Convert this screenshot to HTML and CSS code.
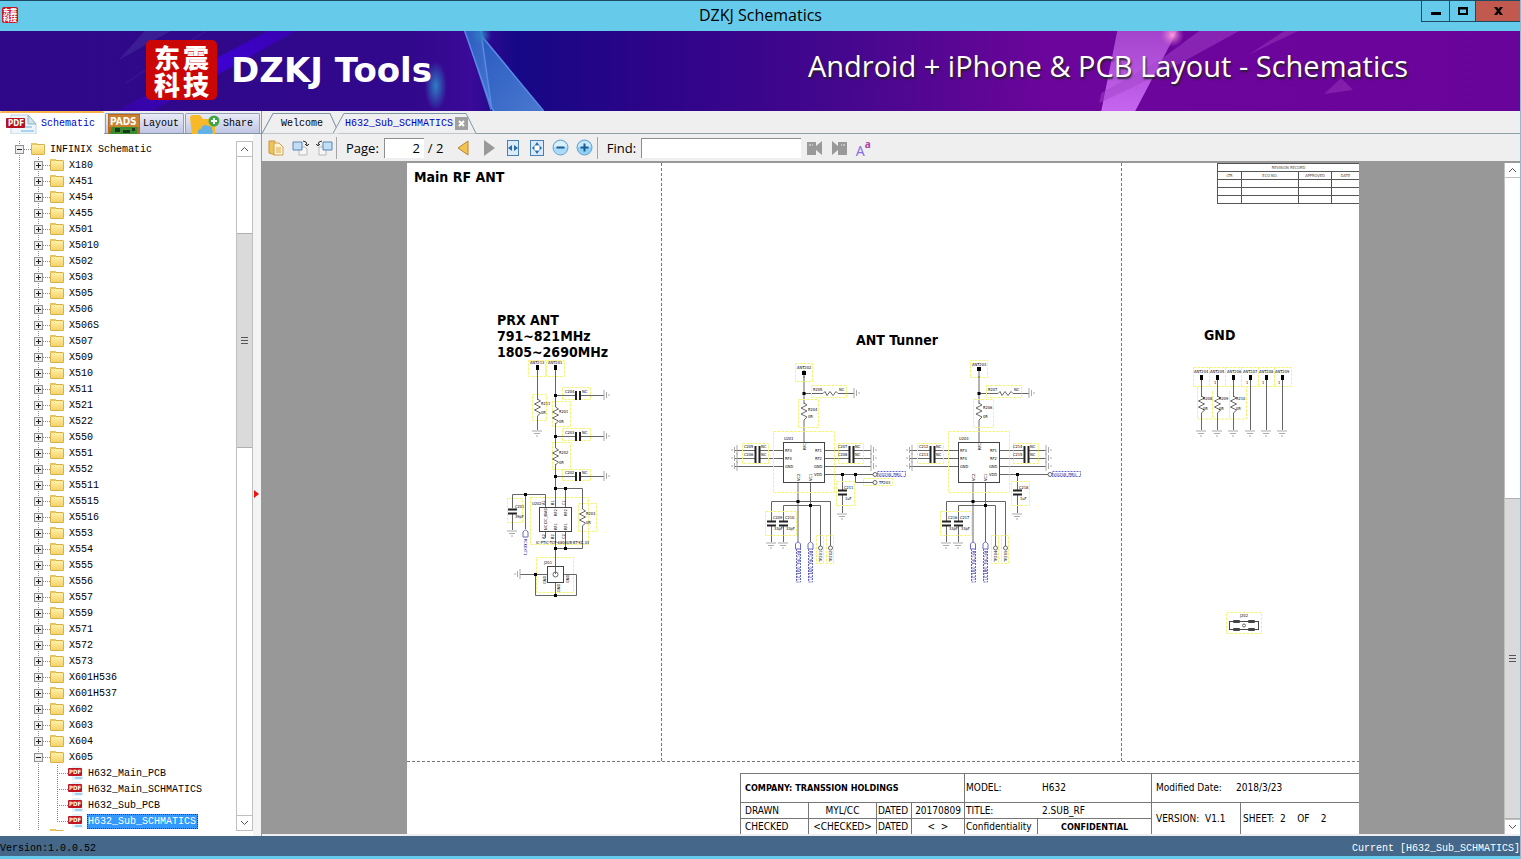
FILE: index.html
```html
<!DOCTYPE html>
<html lang="en">
<head>
  <meta charset="UTF-8">
  <title>DZKJ Schematics</title>
  <link rel="stylesheet" href="styles.css">
</head>
<body>
<div class="window">

  <!-- Title bar -->
  <header class="titlebar">
    <span class="app-icon" aria-hidden="true"><b>东</b><b>震</b><b>科</b><b>技</b></span>
    <h1>DZKJ Schematics</h1>
    <div class="window-buttons">
      <button class="min" aria-label="Minimize"><svg width="10" height="10"><rect y="6" width="10" height="3"/></svg></button>
      <button class="max" aria-label="Maximize"><svg width="10" height="8"><path d="M0 0h10v8H0zM2 2.500v3.500h6V2.500z" fill-rule="evenodd"/></svg></button>
      <button class="close" aria-label="Close"><svg width="9" height="8"><path d="M0 0h3l1.500 2L6 0h3L6 4l3 4H6L4.500 6 3 8H0l3-4z"/></svg></button>
    </div>
  </header>

  <!-- Banner -->
  <div class="banner">
    <svg class="banner-art" viewBox="0 0 1521 80" preserveAspectRatio="none" aria-hidden="true">
      <defs>
        <linearGradient id="ray" x1="0" y1="0" x2="1" y2="1"><stop offset="0" stop-color="#2a5cc0"/><stop offset="1" stop-color="#4a78d0"/></linearGradient>
        <linearGradient id="pink" x1="0" y1="0" x2="0" y2="1"><stop offset="0" stop-color="#a443cb"/><stop offset="1" stop-color="#c565f0"/></linearGradient>
        <linearGradient id="blue" x1="1" y1="0" x2="0" y2="1"><stop offset="0" stop-color="#3a00b8"/><stop offset=".4" stop-color="#4100e0"/><stop offset="1" stop-color="#3703a8"/></linearGradient>
        <radialGradient id="glow"><stop offset="0" stop-color="#2d7fc4"/><stop offset="1" stop-color="#2d7fc4" stop-opacity="0"/></radialGradient>
        <radialGradient id="spark"><stop offset="0" stop-color="#ff9de0"/><stop offset="1" stop-color="#d060d0" stop-opacity="0"/></radialGradient>
      </defs>
      <path d="M268 0h28L152 80h-35z" fill="url(#blue)" opacity=".8"/>
      <path d="M145 0h25l-50 28zM206 0l-80 52" fill="#4530a0" stroke="#4b2a9e" opacity=".5"/>
      <ellipse cx="436" cy="55" rx="11" ry="25" fill="url(#glow)"/>
      <path d="M465 0h18l9 78-1 2z" fill="url(#ray)"/>
      <path d="M482 5l62 75h-51l-1-4z" fill="url(#ray)"/>
      <path d="M465 0l27 77 2 3M481 0l11 77M482 5l62 75" fill="none" stroke="#5b8ae6" stroke-width="1.500"/>
      <circle cx="482" cy="4" r="10" fill="url(#glow)"/>
      <path d="M1118 0h60l-42 80h-34z" fill="url(#pink)"/>
      <path d="M1200 0h40l-62 34-40 20-38 18 2-10 60-34z" fill="#a443cb" opacity=".5"/>
      <path d="M1285 0h14l-50 24zM1342 47l12 12-29 4z" fill="#8b2ab4" opacity=".7"/>
      <circle cx="1173" cy="4" r="12" fill="url(#spark)"/>
    </svg>
    <div class="logo"><b>东</b><b>震</b><b>科</b><b>技</b></div>
    <strong class="brand">DZKJ Tools</strong>
    <span class="slogan">Android + iPhone &amp; PCB Layout - Schematics</span>
  </div>

  <div class="main">
    <!-- Left panel -->
    <aside class="sidebar">
      <nav class="side-tabs">
        <button class="side-tab active">
          <svg width="32" height="20" viewBox="0 0 32 20"><path d="M5 1h17l8 9v10H5z" fill="#eef6fb" stroke="#bcd3df"/><path d="M22 1l8 9h-8z" fill="#cfe2ee" stroke="#8fb3c9"/><path d="M15 13h11M15 17h13" stroke="#a9d4ee" stroke-width="2"/><rect y="4" width="19" height="10" rx="1" fill="#b51220"/><text x="2" y="12" class="pdf-text">PDF</text></svg>
          Schematic</button>
        <button class="side-tab layout">
          <svg width="32" height="20" viewBox="0 0 32 20"><rect width="32" height="20" fill="#bb691d"/><rect x="1" y="1" width="30" height="12" fill="#c9822d"/><text x="2" y="11" class="pads-text">PADS</text><path d="M4 13h25v7H2z" fill="#3d8b31"/><path d="M7 14h5v4H7zM15 16h7v3h-7zM24 14h3v3h-3z" fill="#153b1c"/></svg>
          Layout</button>
        <button class="side-tab share">
          <svg width="32" height="20" viewBox="0 0 32 20"><path d="M2 4q0-3 3-3h7l3 4h10q2 0 2 3v12H4z" fill="#f8b928"/><path d="M10 20q-1-5 3-5 2-6 7-3 5 0 4 4 2 1 0 4z" fill="#62b2e8"/><circle cx="26" cy="7" r="5.500" fill="#3fa648"/><path d="M26 4v6M23 7h6" stroke="#fff" stroke-width="2"/></svg>
          Share</button>
      </nav>
      <div class="side-body">
        <ul class="tree">
          <li><div class="row"><button class="toggle open" aria-label="Collapse"></button><i class="folder"></i>INFINIX Schematic</div>
            <ul>
              <li><div class="row"><button class="toggle" aria-label="Expand"></button><i class="folder"></i>X180</div></li>
              <li><div class="row"><button class="toggle" aria-label="Expand"></button><i class="folder"></i>X451</div></li>
              <li><div class="row"><button class="toggle" aria-label="Expand"></button><i class="folder"></i>X454</div></li>
              <li><div class="row"><button class="toggle" aria-label="Expand"></button><i class="folder"></i>X455</div></li>
              <li><div class="row"><button class="toggle" aria-label="Expand"></button><i class="folder"></i>X501</div></li>
              <li><div class="row"><button class="toggle" aria-label="Expand"></button><i class="folder"></i>X5010</div></li>
              <li><div class="row"><button class="toggle" aria-label="Expand"></button><i class="folder"></i>X502</div></li>
              <li><div class="row"><button class="toggle" aria-label="Expand"></button><i class="folder"></i>X503</div></li>
              <li><div class="row"><button class="toggle" aria-label="Expand"></button><i class="folder"></i>X505</div></li>
              <li><div class="row"><button class="toggle" aria-label="Expand"></button><i class="folder"></i>X506</div></li>
              <li><div class="row"><button class="toggle" aria-label="Expand"></button><i class="folder"></i>X506S</div></li>
              <li><div class="row"><button class="toggle" aria-label="Expand"></button><i class="folder"></i>X507</div></li>
              <li><div class="row"><button class="toggle" aria-label="Expand"></button><i class="folder"></i>X509</div></li>
              <li><div class="row"><button class="toggle" aria-label="Expand"></button><i class="folder"></i>X510</div></li>
              <li><div class="row"><button class="toggle" aria-label="Expand"></button><i class="folder"></i>X511</div></li>
              <li><div class="row"><button class="toggle" aria-label="Expand"></button><i class="folder"></i>X521</div></li>
              <li><div class="row"><button class="toggle" aria-label="Expand"></button><i class="folder"></i>X522</div></li>
              <li><div class="row"><button class="toggle" aria-label="Expand"></button><i class="folder"></i>X550</div></li>
              <li><div class="row"><button class="toggle" aria-label="Expand"></button><i class="folder"></i>X551</div></li>
              <li><div class="row"><button class="toggle" aria-label="Expand"></button><i class="folder"></i>X552</div></li>
              <li><div class="row"><button class="toggle" aria-label="Expand"></button><i class="folder"></i>X5511</div></li>
              <li><div class="row"><button class="toggle" aria-label="Expand"></button><i class="folder"></i>X5515</div></li>
              <li><div class="row"><button class="toggle" aria-label="Expand"></button><i class="folder"></i>X5516</div></li>
              <li><div class="row"><button class="toggle" aria-label="Expand"></button><i class="folder"></i>X553</div></li>
              <li><div class="row"><button class="toggle" aria-label="Expand"></button><i class="folder"></i>X554</div></li>
              <li><div class="row"><button class="toggle" aria-label="Expand"></button><i class="folder"></i>X555</div></li>
              <li><div class="row"><button class="toggle" aria-label="Expand"></button><i class="folder"></i>X556</div></li>
              <li><div class="row"><button class="toggle" aria-label="Expand"></button><i class="folder"></i>X557</div></li>
              <li><div class="row"><button class="toggle" aria-label="Expand"></button><i class="folder"></i>X559</div></li>
              <li><div class="row"><button class="toggle" aria-label="Expand"></button><i class="folder"></i>X571</div></li>
              <li><div class="row"><button class="toggle" aria-label="Expand"></button><i class="folder"></i>X572</div></li>
              <li><div class="row"><button class="toggle" aria-label="Expand"></button><i class="folder"></i>X573</div></li>
              <li><div class="row"><button class="toggle" aria-label="Expand"></button><i class="folder"></i>X601H536</div></li>
              <li><div class="row"><button class="toggle" aria-label="Expand"></button><i class="folder"></i>X601H537</div></li>
              <li><div class="row"><button class="toggle" aria-label="Expand"></button><i class="folder"></i>X602</div></li>
              <li><div class="row"><button class="toggle" aria-label="Expand"></button><i class="folder"></i>X603</div></li>
              <li><div class="row"><button class="toggle" aria-label="Expand"></button><i class="folder"></i>X604</div></li>
              <li><div class="row"><button class="toggle open" aria-label="Collapse"></button><i class="folder"></i>X605</div>
                <ul class="files">
                  <li class="row"><svg class="pdf" viewBox="0 0 15 14"><use href="#pdf"/></svg><a href="#">H632_Main_PCB</a></li>
                  <li class="row"><svg class="pdf" viewBox="0 0 15 14"><use href="#pdf"/></svg><a href="#">H632_Main_SCHMATICS</a></li>
                  <li class="row"><svg class="pdf" viewBox="0 0 15 14"><use href="#pdf"/></svg><a href="#">H632_Sub_PCB</a></li>
                  <li class="row"><svg class="pdf" viewBox="0 0 15 14"><use href="#pdf"/></svg><a href="#" class="selected">H632_Sub_SCHMATICS</a></li>
                </ul>
              </li>
              <li><div class="row"><i class="folder last"></i></div></li>
            </ul>
          </li>
        </ul>
        <div class="scrollbar">
          <button aria-label="Scroll up"><svg width="9" height="6"><path d="M1 5l3.500-3.500L8 5"/></svg></button>
          <span class="track tree-before"></span>
          <span class="thumb tree-thumb"></span>
          <span class="track tree-after"></span>
          <button aria-label="Scroll down"><svg width="9" height="6"><path d="M1 1l3.500 3.500L8 1"/></svg></button>
        </div>
        <div class="splitter"><svg width="5" height="8"><path d="M0 0l5 4-5 4z" fill="#e11"/></svg></div>
      </div>
    </aside>

    <!-- Document area -->
    <section class="workspace">
      <nav class="doc-tabs">
        <button class="doc-tab welcome">
          <svg class="tab-shape" viewBox="0 0 78 21" preserveAspectRatio="none"><path d="M0 20.500L11 .5h57l9 20"/></svg>
          <span>Welcome</span></button>
        <div class="doc-tab current">
          <svg class="tab-shape" viewBox="0 0 146 21" preserveAspectRatio="none"><path d="M0 20.500L11 .5h124l10 20"/></svg>
          <a href="#">H632_Sub_SCHMATICS</a>
          <button class="tab-close" aria-label="Close tab"><svg width="7" height="7"><path d="M1 1l5 5M6 1L1 6" stroke="#fff" stroke-width="2"/></svg></button>
        </div>
      </nav>

      <div class="toolbar">
        <button aria-label="Open"><svg width="16" height="16" viewBox="0 0 16 16"><path d="M1 1h6v14l-6-2z" fill="#efc25c" stroke="#c9963c"/><path d="M6 3h5l4 4v8H6z" fill="#fff3d0" stroke="#d0a050"/><path d="M8 8h5M8 10h5M8 12h5" stroke="#d9a957"/></svg></button>
        <button aria-label="Rotate clockwise"><svg width="17" height="16" viewBox="0 0 17 16"><path d="M7 7h6l2 2v6H7z" fill="#f6f6f6" stroke="#b9b9b9"/><path d="M1 2h9v8H1z" fill="#c2def5" stroke="#5b83b3"/><path d="M11 1q4 0 4 4M13 4l2 2 2-2" fill="none" stroke="#333"/></svg></button>
        <button aria-label="Rotate counterclockwise"><svg width="17" height="16" viewBox="0 0 17 16"><path d="M3 7h7v8H3z" fill="#f6f6f6" stroke="#b9b9b9"/><path d="M7 2h9v8H7z" fill="#c2def5" stroke="#5b83b3"/><path d="M6 1Q2 1 2 5M0 4l2 2 2-2" fill="none" stroke="#333"/></svg></button>
        <span class="sep"></span>
        <label for="page">Page:</label>
        <input id="page" class="page-input" type="text" value="2">
        <span class="page-total">/ 2</span>
        <button class="prev" aria-label="Previous page"><svg width="12" height="16" viewBox="0 0 12 16"><path d="M11 1v14L1 8z" fill="#f3c351" stroke="#b58730"/></svg></button>
        <button class="next" aria-label="Next page"><svg width="12" height="16" viewBox="0 0 12 16"><path d="M1 0v16L12 8z" fill="#999"/></svg></button>
        <button aria-label="Fit width"><svg width="16" height="16" viewBox="0 0 16 16"><rect x="2.500" y=".5" width="11" height="15" fill="#d7ebfa" stroke="#4d7eb0"/><path d="M3 8l4-3v6zM13 8L9 5v6z" fill="#2d67a5"/></svg></button>
        <button aria-label="Fit page"><svg width="16" height="16" viewBox="0 0 16 16"><rect x="1.500" y=".5" width="13" height="15" fill="#d7ebfa" stroke="#4d7eb0"/><path d="M8 2l2 3H6zM8 14l2-3H6zM3 8l2-2v4zM13 8l-2-2v4z" fill="#2d67a5"/><rect x="5.500" y="5.500" width="5" height="5" fill="#fff" stroke="#9bbfdd"/></svg></button>
        <button aria-label="Zoom out"><svg width="17" height="17" viewBox="0 0 17 17"><circle cx="8.500" cy="8.500" r="7.500" fill="#a8dcf8" stroke="#6d9fc4"/><path d="M2 8a6.500 6 0 0 1 13 0z" fill="#d9f1fd"/><path d="M4.500 8.500h8" stroke="#1d5b94" stroke-width="2"/></svg></button>
        <button aria-label="Zoom in"><svg width="17" height="17" viewBox="0 0 17 17"><circle cx="8.500" cy="8.500" r="7.500" fill="#8fd0f6" stroke="#6d9fc4"/><path d="M2 8a6.500 6 0 0 1 13 0z" fill="#c9eafc"/><path d="M4.500 8.500h8M8.500 4.500v8" stroke="#1d5b94" stroke-width="2"/></svg></button>
        <span class="sep"></span>
        <label for="find">Find:</label>
        <input id="find" class="find-input" type="text">
        <button class="find-prev" aria-label="Find previous"><svg width="16" height="16" viewBox="0 0 16 16"><path d="M0 2h9v4l6-5v14l-6-5v5H0z" fill="#999"/><path d="M2 5h2M5 5h1" stroke="#eee"/></svg></button>
        <button class="find-next" aria-label="Find next"><svg width="16" height="16" viewBox="0 0 16 16"><path d="M16 2H7v4L1 1v14l6-5v5h9z" fill="#999"/><path d="M14 5h-2M11 5h-1" stroke="#eee"/></svg></button>
        <button class="match-case" aria-label="Match case"><span>A</span><sup>a</sup></button>
      </div>

      <div class="viewer">
        <div class="canvas">
          <article class="page">
            <svg class="drawing" width="952" height="610" viewBox="407 163 952 610">
              <defs>
                <g id="pdf"><path d="M4 0h8l3 3v11H4z" fill="#e5f3fb"/><path d="M7 12h7" stroke="#9fd0ee" stroke-width="2"/><rect y="2" width="14" height="8" rx="1" fill="#c01622"/><text x="1" y="8" class="pdf-small">PDF</text></g>
                <path id="gnd" d="M-5 0H5M-3 2.500H3M-1 5H1" class="gnd"/>
                <path id="res" d="M0 -9L3 -7 -3 -4 3 -1 -3 2 3 5 0 8" class="wire"/>
                <path id="cap" d="M-2 -4V5M2 -4V5" class="plate"/>
                <g id="pill"><path d="M-2.500 7V2Q0 -2 2.500 2V7z" class="blue-line"/></g>
                <!-- Antenna tuner, shared by both channels -->
                <g id="tuner">
                  <path class="wire" d="M804 376V404M804 420V442M804 393.500H823l2-2 2 4 3-4 3 4 3-4 2 2H854M735 450.500H755M759 450.500H783M735 458.500H755M759 458.500H783M735 466.500H783M824 450.500H849M853 450.500H871M824 458.500H849M853 458.500H871M824 466.500H871M824 474.500H873M842.500 474V490M842.500 494V513M798 482V542M810.500 482V542M771.500 521V501.500H830.500V546M783.500 521V505.500H820.500V546M771.500 525V542M783.500 525V542"/>
                  <rect x="783.500" y="442.500" width="41" height="40" class="chip"/>
                  <use href="#res" x="804" y="412"/>
                  <use href="#gnd" transform="translate(854 393) rotate(-90)"/>
                  <use href="#gnd" transform="translate(871 450) rotate(-90)"/>
                  <use href="#gnd" transform="translate(871 458) rotate(-90)"/>
                  <use href="#gnd" transform="translate(871 466) rotate(-90)"/>
                  <use href="#gnd" transform="translate(737 450) rotate(90)"/>
                  <use href="#gnd" transform="translate(737 458) rotate(90)"/>
                  <use href="#gnd" transform="translate(737 466) rotate(90)"/>
                  <use href="#gnd" x="842" y="514"/>
                  <use href="#gnd" x="771" y="543"/>
                  <use href="#gnd" x="783" y="543"/>
                  <path class="plate" d="M755.500 446v17M759.500 446v17M849.500 446v17M853.500 446v17M838 490.500h9M838 494.500h9M767 521.500h9M767 525.500h9M779 521.500h9M779 525.500h9"/>
                  <circle cx="875" cy="474.500" r="2" class="ring"/>
                  <circle cx="820.500" cy="548" r="2" class="ring"/>
                  <circle cx="830.500" cy="548" r="2" class="ring"/>
                  <use href="#pill" x="798" y="542"/>
                  <use href="#pill" x="810.500" y="542"/>
                  <path class="dot" d="M802.500 392h3v3h-3zM796.500 500h3v3h-3zM809 504h3v3h-3zM841 473h3v3h-3z"/>
                  <path class="zone" d="M773.500 431.500h61v61h-61zM811.500 385.500h35v12h-35zM798.500 399.500h20v28h-20zM742.500 443.500h26v20h-26zM838.500 443.500h25v20h-25zM836.500 481.500h18v24h-18zM765.500 511.500h31v24h-31zM816.500 535.500h7v28h-7zM826.500 535.500h7v28h-7z"/>
                  <text x="839" y="391">NC</text>
                  <text x="761" y="448">NC</text><text x="761" y="456">NC</text>
                  <text x="855" y="448">NC</text><text x="855" y="456">NC</text>
                  <text x="785" y="452">RF3</text><text x="785" y="460">RF4</text><text x="785" y="468">GND</text>
                  <text x="815" y="452">RF1</text><text x="815" y="460">RF2</text><text x="814" y="468">GND</text><text x="814" y="476">VDD</text>
                  <text transform="translate(806 450) rotate(-90)">RFC</text>
                  <text transform="translate(800 481) rotate(-90)">VC2</text>
                  <text transform="translate(812 481) rotate(-90)">VC1</text>
                  <text x="845" y="500">1uF</text><text x="774" y="530">33pF</text><text x="786" y="530">33pF</text>
                  <rect x="877.500" y="471.500" width="28" height="5" class="blue-dash"/>
                  <path class="blue-dash" d="M796.500 549v33h4v-33M808.500 549v33h4v-33"/>
                </g>
              </defs>

              <path class="border" d="M661.500 163V761M1121.500 163V761M407 761.500H1359"/>

              <g class="heading">
                <text x="414" y="182">Main RF ANT</text>
                <text x="497" y="325">PRX ANT</text>
                <text x="497" y="341">791~821MHz</text>
                <text x="497" y="357">1805~2690MHz</text>
                <text x="856" y="345">ANT Tunner</text>
                <text x="1204" y="340">GND</text>
              </g>

              <!-- PRX antenna -->
              <g class="parts">
                <path class="zone" d="M528.500 360.500h17v16h-17zM546.500 360.500h18v16h-18zM532.500 394.500h14v26h-14zM552.500 401.500h18v25h-18zM552.500 442.500h18v27h-18zM562.500 387.500h28v12h-28zM562.500 428.500h28v12h-28zM562.500 469.500h28v11h-28zM530.500 497.500h58v47h-58zM507.500 498.500h15v24h-15zM578.500 503.500h18v28h-18zM536.500 557.500h37v35h-37z"/>
                <path class="wire" d="M537.500 368V400M537.500 416V430M555.500 368V407M555.500 423V448M555.500 464V507M555.500 395.500H576M580 395.500H604M555.500 436.500H576M580 436.500H604M555.500 476.500H576M580 476.500H604M555.500 488.500H582.500V509M582.500 526V548.500H555.500M565.500 488V507M565.500 531V548M555.500 531V574M545.500 507V494.500H512.500V508M512.500 513V530M525.500 494V529M545.500 531V538M520 574.500H548M564 574.500H576.500V595.500H535.500V574M555.500 583V595"/>
                <rect x="539.500" y="507.500" width="32" height="24" class="chip"/>
                <rect x="547.500" y="566.500" width="16" height="16" class="chip"/>
                <circle cx="555.500" cy="574.500" r="2.500" class="ring"/>
                <use href="#res" x="537.500" y="408"/><use href="#res" x="555.500" y="416"/>
                <use href="#res" x="555.500" y="457"/><use href="#res" x="582.500" y="518"/>
                <use href="#cap" x="578" y="395"/><use href="#cap" x="578" y="436"/><use href="#cap" x="578" y="476"/>
                <path class="plate" d="M508 509.500h9M508 513.500h9"/>
                <use href="#gnd" x="537" y="431"/><use href="#gnd" x="512" y="531"/>
                <use href="#gnd" transform="translate(604 395) rotate(-90)"/>
                <use href="#gnd" transform="translate(604 436) rotate(-90)"/>
                <use href="#gnd" transform="translate(604 476) rotate(-90)"/>
                <use href="#gnd" transform="translate(520 574) rotate(90)"/>
                <use href="#pill" x="525.500" y="530"/>
                <path class="dot" d="M536 365h3v5h-3zM554 365h3v5h-3zM554 394h3v3h-3zM554 435h3v3h-3zM554 475h3v3h-3zM554 487h3v3h-3zM564 487h3v3h-3zM524 493h3v3h-3zM554 547h3v3h-3zM564 547h3v3h-3zM534 573h3v3h-3zM554 594h3v3h-3z"/>
                <text x="530" y="364">ANT213</text><text x="548" y="364">ANT201</text>
                <text x="541" y="405">R211</text><text x="541" y="414">0R</text>
                <text x="559" y="413">R201</text><text x="559" y="423">0R</text>
                <text x="559" y="454">R202</text><text x="559" y="464">0R</text>
                <text x="586" y="515">R203</text><text x="586" y="524">0R</text>
                <text x="565" y="393">C204</text><text x="582" y="393">NC</text>
                <text x="565" y="434">C203</text><text x="582" y="434">NC</text>
                <text x="565" y="474">C202</text><text x="582" y="474">NC</text>
                <text x="515" y="508">C201</text><text x="515" y="518">39pF</text>
                <text x="532" y="505">U202</text><text x="544" y="564">J201</text>
                <text x="536" y="544">IC-PTIC-TCP-6800UB-BT-KC.33</text>
                <text transform="translate(547 530) rotate(-90)">NC DC_BIAS</text>
                <text transform="translate(557 516) rotate(-90)">RF2</text><text transform="translate(567 516) rotate(-90)">RF2</text>
                <text transform="translate(557 530) rotate(-90)">RF1</text><text transform="translate(567 530) rotate(-90)">RF1</text>
                <text transform="translate(545 505) rotate(-90)">A1</text><text transform="translate(554 505) rotate(-90)">B1</text><text transform="translate(565 505) rotate(-90)">C1</text>
                <text transform="translate(545 539) rotate(-90)">A2</text><text transform="translate(554 539) rotate(-90)">B2</text><text transform="translate(565 539) rotate(-90)">C2</text>
                <text transform="translate(546 584) rotate(-90)">GND</text><text transform="translate(569 583) rotate(-90)">GND</text><text transform="translate(560 592) rotate(-90)">GND</text>
                <text class="net" transform="translate(524 539) rotate(90)">RCKEXT1</text>
              </g>

              <!-- ANT tuner 1 -->
              <g class="parts">
                <use href="#tuner"/>
                <path class="zone" d="M795.500 363.500h17v18h-17zM863.500 478.500h29v7h-29z"/>
                <path class="wire" d="M804 370V378M855.500 474V482.500H873"/>
                <circle cx="875" cy="482.500" r="2" class="ring"/>
                <path class="dot" d="M802 371h4v4h-4zM854 473h3v3h-3z"/>
                <text x="797" y="369">ANT202</text><text x="813" y="391">R205</text>
                <text x="808" y="411">R204</text><text x="808" y="418">0R</text><text x="784" y="440">U201</text>
                <text x="744" y="448">C205</text><text x="744" y="456">C206</text>
                <text x="838" y="448">C207</text><text x="838" y="456">C208</text>
                <text x="844" y="489">C211</text><text x="773" y="519">C209</text><text x="785" y="519">C210</text>
                <text x="879" y="484">TP203</text>
                <text class="net" x="878" y="476">VIO2V8_PMU</text>
                <text class="net" transform="translate(797 551) rotate(90)">RFCTRL_01[1,2]</text>
                <text class="net" transform="translate(809 551) rotate(90)">RFCTRL_02[1,2]</text>
                <text transform="translate(822 562) rotate(-90)">TP201</text><text transform="translate(832 562) rotate(-90)">TP202</text>
              </g>

              <!-- ANT tuner 2 -->
              <g class="parts" transform="translate(175 0)">
                <use href="#tuner"/>
                <path class="zone" d="M795.500 360.500h17v17h-17z"/>
                <path class="wire" d="M804 368V378"/>
                <path class="dot" d="M802 367h4v4h-4z"/>
                <text x="797" y="366">ANT203</text><text x="813" y="391">R207</text>
                <text x="808" y="409">R206</text><text x="808" y="418">0R</text><text x="784" y="440">U203</text>
                <text x="744" y="448">C212</text><text x="744" y="456">C213</text>
                <text x="838" y="448">C214</text><text x="838" y="456">C215</text>
                <text x="844" y="489">C218</text><text x="773" y="519">C216</text><text x="785" y="519">C217</text>
                <text class="net" x="878" y="476">VIO2V8_PMU</text>
                <text class="net" transform="translate(797 551) rotate(90)">RFCTRL_03[1,2]</text>
                <text class="net" transform="translate(809 551) rotate(90)">RFCTRL_04[1,2]</text>
                <text transform="translate(822 562) rotate(-90)">TP204</text><text transform="translate(832 562) rotate(-90)">TP205</text>
              </g>

              <!-- Ground antennas -->
              <g class="parts">
                <path class="zone" d="M1193.500 367.500h98v19h-98zM1209.500 367v20M1225.500 367v20M1241.500 367v20M1258.500 367v20M1274.500 367v20M1197.500 387v32h49v-32M1212.500 391v28M1229.500 391v28"/>
                <path class="wire" d="M1201.500 379V397M1201.500 413V430M1217.500 379V397M1217.500 413V430M1233.500 379V397M1233.500 413V430M1250.500 379V430M1266.500 379V430M1282.500 379V430"/>
                <use href="#res" x="1201.500" y="405"/><use href="#res" x="1217.500" y="405"/><use href="#res" x="1233.500" y="405"/>
                <path class="dot" d="M1200 375h3v5h-3zM1216 375h3v5h-3zM1232 375h3v5h-3zM1249 375h3v5h-3zM1265 375h3v5h-3zM1281 375h3v5h-3z"/>
                <use href="#gnd" x="1201" y="431"/><use href="#gnd" x="1217" y="431"/><use href="#gnd" x="1233" y="431"/><use href="#gnd" x="1250" y="431"/><use href="#gnd" x="1266" y="431"/><use href="#gnd" x="1282" y="431"/>
                <text x="1194" y="373">ANT204</text><text x="1210" y="373">ANT205</text><text x="1227" y="373">ANT206</text>
                <text x="1243" y="373">ANT207</text><text x="1259" y="373">ANT208</text><text x="1275" y="373">ANT209</text>
                <text x="1214" y="384">1</text><text x="1246" y="384">1</text><text x="1262" y="384">1</text><text x="1278" y="384">1</text>
                <text x="1203" y="400">R208</text><text x="1219" y="400">R209</text><text x="1236" y="400">R210</text>
                <text x="1203" y="410">0R</text><text x="1219" y="410">0R</text><text x="1236" y="410">0R</text>
                <rect class="zone" x="1226.500" y="612.500" width="35" height="21"/>
                <rect class="chip" x="1229.500" y="621.500" width="29" height="8"/>
                <path class="chip" d="M1233.500 620.500h6v2h-6zM1248.500 620.500h6v2h-6zM1233.500 628.500h6v2h-6zM1248.500 628.500h6v2h-6z"/>
                <circle class="ring" cx="1244" cy="625.500" r="1.500"/>
                <text x="1240" y="617">J202</text>
              </g>
            </svg>

            <table class="revision">
              <colgroup><col class="c24"><col class="c57"><col class="c33"><col></colgroup>
              <tr><th colspan="4">REVISION RECORD</th></tr>
              <tr><th>LTR</th><th>ECO NO.</th><th>APPROVED</th><th>DATE</th></tr>
              <tr><td></td><td></td><td></td><td></td></tr>
              <tr><td></td><td></td><td></td><td></td></tr>
              <tr><td></td><td></td><td></td><td></td></tr>
            </table>

            <table class="title-block">
              <colgroup><col class="c68"><col class="c68"><col class="c35"><col class="c53"><col class="c73"><col class="c114"><col class="c89"><col></colgroup>
              <tr class="tall"><th colspan="4">COMPANY: TRANSSION HOLDINGS</th><td colspan="2" class="tight"><span class="key">MODEL:</span>H632</td><td colspan="2"><span class="key">Modified Date:</span>2018/3/23</td></tr>
              <tr><td>DRAWN</td><td class="center">MYL/CC</td><td class="tight">DATED</td><td class="tight center">20170809</td><td colspan="2" class="tight"><span class="key">TITLE:</span>2.SUB_RF</td><td rowspan="2">VERSION:&nbsp; V1.1</td><td rowspan="2" class="sheet">SHEET:&nbsp; 2 &nbsp;&nbsp; OF &nbsp;&nbsp; 2</td></tr>
              <tr><td>CHECKED</td><td class="tight center">&lt;CHECKED&gt;</td><td class="tight">DATED</td><td class="center">&lt;&nbsp; &gt;</td><td class="tight">Confidentiality</td><th class="center">CONFIDENTIAL</th></tr>
            </table>
          </article>
        </div>
        <div class="scrollbar">
          <button aria-label="Scroll up"><svg width="9" height="6"><path d="M1 5l3.500-3.500L8 5"/></svg></button>
          <span class="track"></span>
          <span class="thumb page-thumb"></span>
          <button aria-label="Scroll down"><svg width="9" height="6"><path d="M1 1l3.500 3.500L8 1"/></svg></button>
        </div>
      </div>
    </section>
  </div>

  <footer class="statusbar"><span>Version:1.0.0.52</span><span class="current-file">Current [H632_Sub_SCHMATICS]</span></footer>
</div>
</body>
</html>
```
FILE: styles.css
```css
* {
  box-sizing: border-box;
}
body {
  margin: 0;
  font-family: "Liberation Mono", monospace;
  font-size: 10px;
  color: #000;
}
button {
  font: inherit;
  color: inherit;
  padding: 0;
  border: none;
  background: none;
}
a {
  color: inherit;
  text-decoration: none;
}
.window {
  display: flex;
  flex-direction: column;
  height: 100vh;
  overflow: hidden;
  background: #efeff0;
  border-right: 1px solid #66cbea;
  border-bottom: 3px solid #66cbea;
}

/* Title bar */
.titlebar {
  display: grid;
  grid-template-columns: 1fr auto 1fr;
  height: 31px;
  flex: none;
  background: #66cbea;
  border-top: 1px solid #1c4a60;
  margin-right: -1px;
}
.titlebar h1 {
  margin: 0;
  font: 16px/28px "Open Sans", sans-serif;
}
.app-icon {
  display: grid;
  grid-template-columns: 7px 7px;
  grid-template-rows: 7px 7px;
  place-content: center;
  width: 16px;
  height: 16px;
  margin: 6px 2px;
  border-radius: 2px;
  background: #c8141c;
  color: #fff;
  font: bold 7px/7px "Noto Sans CJK SC", sans-serif;
}
.window-buttons {
  display: flex;
  justify-self: end;
  height: 21px;
}
.window-buttons button {
  display: flex;
  align-items: center;
  justify-content: center;
  border: 1px solid #1c4a60;
  border-top: none;
  border-right: none;
}
.min {
  width: 28px;
}
.max {
  width: 26px;
}
.window-buttons .close {
  width: 46px;
  background: #c2594f;
}

/* Banner */
.banner {
  position: relative;
  display: flex;
  align-items: center;
  height: 80px;
  flex: none;
  padding: 0 112px 2px 146px;
  background: linear-gradient(90deg, #2f088a 0, #31088b 27%, #3a0a98 31%, #150886 34%, #2d0488 43%, #48078f 57%, #6c059b 69%, #69049a 100%);
  color: #fff;
}
.banner-art {
  position: absolute;
  inset: 0;
  width: 100%;
  height: 100%;
}
.logo {
  position: relative;
  display: grid;
  grid-template-columns: 29px 29px;
  grid-template-rows: 27px 27px;
  place-content: center;
  justify-items: center;
  width: 71px;
  height: 60px;
  border-radius: 5px;
  background: #cb0606;
  font: bold 26px/27px "Noto Sans CJK SC", sans-serif;
}
.brand {
  position: relative;
  margin-left: 14px;
  font: bold 34px/40px "DejaVu Sans", sans-serif;
}
.slogan {
  position: relative;
  margin-left: auto;
  padding-bottom: 8px;
  font: 29px/40px "Open Sans", sans-serif;
  text-shadow: 1px 2px 2px #222;
  white-space: nowrap;
}

/* Left panel */
.main {
  display: flex;
  flex: 1;
  min-height: 0;
}
.sidebar {
  display: flex;
  flex-direction: column;
  width: 262px;
  flex: none;
  border-right: 1px solid #8a9aa8;
}
.side-tabs {
  display: flex;
  align-items: flex-end;
  gap: 1px;
  height: 23px;
  flex: none;
  border-bottom: 1px solid #8293a6;
}
.side-tab {
  display: flex;
  align-items: center;
  gap: 3px;
  height: 20px;
  padding-left: 2px;
  border: 1px solid #93a0b8;
  border-bottom: none;
  border-radius: 2px 2px 0 0;
  background: linear-gradient(#e9ebf6, #bfc6e4);
}
.side-tab.active {
  height: 23px;
  padding: 0 9px 0 6px;
  margin-bottom: -1px;
  border: none;
  border-top: 2px solid #f7b04a;
  background: #fff;
  color: #0000c8;
}
.layout {
  padding-right: 4px;
}
.share {
  padding-right: 6px;
}
.pdf-text {
  font: bold 8px "DejaVu Sans Condensed", sans-serif;
  fill: #fff;
}
.pads-text {
  font: bold 10px "DejaVu Sans Condensed", sans-serif;
  fill: #fff;
}
.pdf-small {
  font: bold 6px "DejaVu Sans Condensed", sans-serif;
  fill: #fff;
}
.side-body {
  display: flex;
  flex: 1;
  min-height: 0;
  padding: 7px 0 5px;
  background: #fff;
}
.tree, .tree ul {
  list-style: none;
  margin: 0;
  padding: 0;
}
.tree {
  flex: 1;
  overflow: hidden;
  background: repeating-linear-gradient(#888 0 1px, #fff 1px 2px) 19px 0 / 1px 100% no-repeat;
}
.tree ul {
  margin-left: 19px;
  background: repeating-linear-gradient(#888 0 1px, #fff 1px 2px) 19px 0 / 1px 100% no-repeat;
}
.tree .files {
  background-size: 1px calc(100% - 8px);
}
.row {
  display: flex;
  align-items: center;
  height: 16px;
  padding-left: 15px;
  white-space: nowrap;
}
.toggle {
  width: 9px;
  height: 9px;
  border: 1px solid #919191;
  background: linear-gradient(#222, #222) center / 5px 1px no-repeat, linear-gradient(#222, #222) center / 1px 5px no-repeat, #eee;
}
.toggle.open {
  background: linear-gradient(#222, #222) center / 5px 1px no-repeat, #eee;
}
.toggle::after {
  content: "";
  display: block;
  width: 7px;
  margin-left: 8px;
  border-top: 1px dotted #888;
}
.folder {
  width: 14px;
  height: 11px;
  margin: 0 5px 0 7px;
  border: 1px solid #d9b14a;
  border-radius: 1px;
  background: linear-gradient(#fff0a8, #f5d469);
}
.folder::before {
  content: "";
  display: block;
  width: 6px;
  height: 2px;
  margin: -2px 0 0 -1px;
  background: #e9c75e;
}
.folder.last {
  align-self: flex-start;
  margin: 1px 5px 0 16px;
}
.files .row {
  padding-left: 19px;
}
.files .row::before {
  content: "";
  width: 11px;
  border-top: 1px dotted #888;
}
.pdf {
  width: 15px;
  height: 14px;
  margin-right: 4px;
}
.files a {
  padding: 0 2px 0 1px;
  line-height: 15px;
}
.files .selected {
  background: #3399ff;
  color: #fff;
  outline: 1px dotted #503000;
  outline-offset: -1px;
}
.splitter {
  display: flex;
  align-items: center;
  width: 8px;
  margin-top: -7px;
  margin-bottom: -5px;
  padding: 18px 0 0 1px;
  background: #f3f4f6;
}
.scrollbar {
  display: flex;
  flex-direction: column;
  width: 17px;
  flex: none;
  background: #fff;
  border: 1px solid #c0c0c0;
}
.scrollbar button {
  display: flex;
  align-items: center;
  justify-content: center;
  height: 15px;
  flex: none;
  border-bottom: 1px solid #c0c0c0;
}
.scrollbar button:last-child {
  border-top: 1px solid #c0c0c0;
  border-bottom: none;
}
.scrollbar path {
  fill: none;
  stroke: #555;
}
.track {
  flex: 321;
}
.tree-before {
  flex: 76;
}
.tree-after {
  flex: 368;
}
.thumb {
  flex: 214;
  border: solid #b0b0b0;
  border-width: 1px 0;
  background: repeating-linear-gradient(#555 0 1px, #dadada 1px 3px) center / 7px 7px no-repeat, #dadada;
}
.page-thumb {
  flex: 320;
}

/* Document tabs */
.workspace {
  display: flex;
  flex-direction: column;
  flex: 1;
  min-width: 0;
}
.doc-tabs {
  display: flex;
  height: 23px;
  flex: none;
  padding-top: 2px;
  border-bottom: 1px solid #8f9fa8;
}
.doc-tab {
  position: relative;
  display: flex;
  align-items: center;
  height: 21px;
}
.doc-tab > :not(.tab-shape) {
  position: relative;
}
.tab-shape {
  position: absolute;
  inset: 0;
  width: 100%;
  height: 100%;
  fill: #efeff0;
  stroke: #7f96a4;
}
.welcome {
  padding: 0 17px 0 19px;
}
.current {
  margin-left: -7px;
  padding: 0 9px 0 12px;
  gap: 2px;
  color: #0000c8;
}
.tab-close {
  display: flex;
  align-items: center;
  justify-content: center;
  width: 13px;
  height: 13px;
  background: #a0a0a0;
}

/* Toolbar */
.toolbar {
  display: flex;
  align-items: center;
  height: 28px;
  flex: none;
  padding-left: 2px;
  border-bottom: 1px solid #999;
  font: 13px/20px "Open Sans", sans-serif;
}
.toolbar button {
  display: flex;
  align-items: center;
  justify-content: center;
  width: 24px;
  height: 20px;
}
.sep {
  width: 1px;
  height: 22px;
  background: #a5a5a5;
}
.toolbar label {
  margin: 0 5px 0 9px;
}
.toolbar input {
  height: 20px;
  padding: 0 4px;
  border: solid #8e8e8e;
  border-width: 1px 0 0 1px;
  background: #fff;
  font: inherit;
}
.toolbar .page-input {
  width: 40px;
  text-align: right;
}
.page-total {
  width: 23px;
  margin-left: 4px;
}
.toolbar .next {
  margin-left: 2px;
}
.toolbar .find-input {
  width: 160px;
  margin-right: 2px;
}
.toolbar .match-case {
  align-items: flex-end;
  font: 14px/14px "Noto Sans", sans-serif;
  color: #8a70e8;
}
.match-case sup {
  align-self: flex-start;
  font: bold 10px/12px "Noto Sans", sans-serif;
  color: #b040a8;
}

/* Page view */
.viewer {
  display: flex;
  flex: 1;
  min-height: 0;
  margin-bottom: 2px;
  padding-top: 1px;
  background: #989898;
}
.viewer .scrollbar {
  width: 16px;
  border-width: 0 0 0 1px;
}
.canvas {
  display: flex;
  justify-content: center;
  align-items: flex-start;
  flex: 1;
  min-width: 0;
  overflow: hidden;
}
.page {
  position: relative;
  flex: none;
  background: #fff;
}
.drawing {
  display: block;
}
.heading {
  font: bold 14px "DejaVu Sans Condensed", "DejaVu Sans", sans-serif;
}
.parts, .drawing defs text {
  font-family: "DejaVu Sans Condensed", sans-serif;
  font-size: 4px;
}
.drawing .pdf-small {
  font-size: 6px;
}
.wire, .chip, .ring {
  fill: none;
  stroke: #666;
  stroke-width: 1;
}
.chip {
  stroke: #444;
}
.gnd {
  fill: none;
  stroke: #aaa;
}
.plate {
  fill: none;
  stroke: #222;
  stroke-width: 2;
}
.zone {
  fill: none;
  stroke: #f4f47c;
  stroke-dasharray: 3 1;
}
.border {
  fill: none;
  stroke: #777;
  stroke-dasharray: 3 2;
}
.blue-line, .blue-dash {
  fill: none;
  stroke: #6a6ac8;
}
.blue-dash {
  stroke-dasharray: 2 1;
}
.net {
  fill: #1414a0;
}
.revision {
  position: absolute;
  top: 0;
  right: 0;
  width: 142px;
  table-layout: fixed;
  border-collapse: collapse;
  font: 4px/6px "DejaVu Sans Condensed", sans-serif;
  color: #444;
}
.revision td, .revision th {
  height: 8px;
  padding: 0;
  border: 1px solid #555;
  font-weight: normal;
}
.revision tr > :last-child, .title-block .tall > :last-child, .title-block .sheet {
  border-right: none;
}
.title-block {
  width: 619px;
  margin-left: auto;
  table-layout: fixed;
  border-collapse: collapse;
  font: 10px/14px "DejaVu Sans Condensed", "DejaVu Sans", sans-serif;
}
.title-block td, .title-block th {
  height: 16px;
  padding: 0 4px;
  border: 1px solid #777;
  text-align: left;
  white-space: nowrap;
}
.title-block th {
  font-size: 9px;
}
.title-block .tall > * {
  height: 29px;
}
.title-block .tight {
  padding: 0 1px;
}
.title-block .center {
  text-align: center;
}
.title-block .sheet {
  padding: 0 2px;
}
.key {
  display: inline-block;
  width: 76px;
}
td:not(.tight) > .key {
  width: 80px;
}
.c24 { width: 24px; }
.c57 { width: 57px; }
.c33 { width: 33px; }
.c68 { width: 68px; }
.c35 { width: 35px; }
.c53 { width: 53px; }
.c73 { width: 73px; }
.c114 { width: 114px; }
.c89 { width: 89px; }

/* Status bar */
.statusbar {
  display: flex;
  justify-content: space-between;
  align-items: flex-end;
  height: 20px;
  flex: none;
  background: #44678a;
  line-height: 14px;
}
.current-file {
  color: #fff;
}
```
